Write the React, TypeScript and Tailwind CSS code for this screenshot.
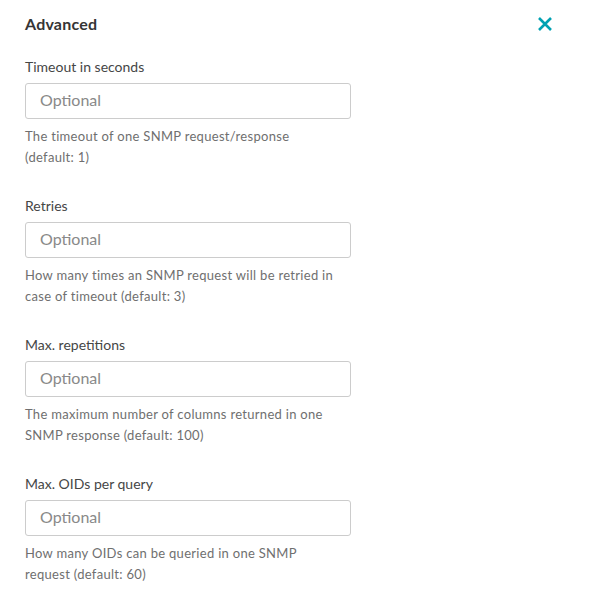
import React from "react";

const fields = [
  { label: "Timeout in seconds", help: ["The timeout of one SNMP request/response", "(default: 1)"] },
  { label: "Retries", help: ["How many times an SNMP request will be retried in", "case of timeout (default: 3)"] },
  { label: "Max. repetitions", help: ["The maximum number of columns returned in one", "SNMP response (default: 100)"] },
  { label: "Max. OIDs per query", help: ["How many OIDs can be queried in one SNMP", "request (default: 60)"] },
];

export default function App() {
  return (
    <div className="w-[592px] h-[597px] bg-white font-['Lato',sans-serif] pl-[25px] pt-[12px]">
      <div className="flex items-center justify-between w-[528px] h-[24px]">
        <h2 className="text-[16px] leading-[24px] font-bold text-[#353535] tracking-[0.2px]">Advanced</h2>
        <svg width="16" height="16" viewBox="0 0 16 16">
          <path d="M2 2 L14 14 M14 2 L2 14" stroke="#00a1b2" strokeWidth="2.6" strokeLinecap="butt" />
        </svg>
      </div>
      <div className="flex flex-col gap-[28px] mt-[21px]">
        {fields.map((f) => (
          <div key={f.label} className="flex flex-col">
            <label className="text-[14px] leading-[20px] text-[#454646]">{f.label}</label>
            <input
              placeholder="Optional"
              className="mt-[6px] w-[326px] h-[36px] border border-[#cccccc] rounded-[3px] px-[14px] pb-[3px] text-[16px] text-[#454646] placeholder:text-[#898989] outline-none"
            />
            <p className="mt-[7px] text-[13px] leading-[21px] tracking-[0.3px] text-[#6f6f6f]">
              {f.help[0]}
              <br />
              {f.help[1]}
            </p>
          </div>
        ))}
      </div>
    </div>
  );
}
